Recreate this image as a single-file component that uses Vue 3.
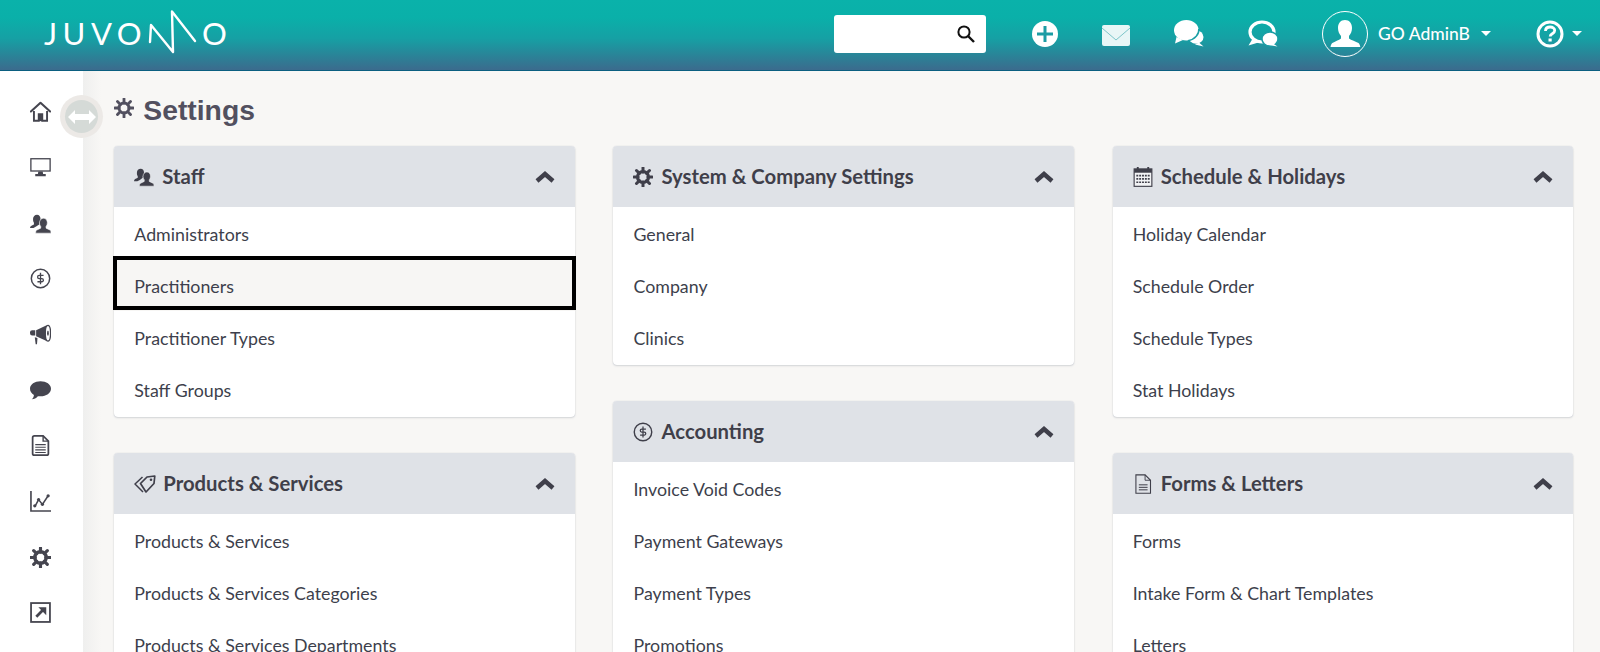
<script setup>
const side = ['home','monitor','staff','dollar','mega','bubble','doc','chart','gear','export']
const columns = [
  [
    { title: 'Staff', icon: 'staff', items: ['Administrators', 'Practitioners', 'Practitioner Types', 'Staff Groups'] },
    { title: 'Products & Services', icon: 'tags', items: ['Products & Services', 'Products & Services Categories', 'Products & Services Departments'] }
  ],
  [
    { title: 'System & Company Settings', icon: 'gear', items: ['General', 'Company', 'Clinics'] },
    { title: 'Accounting', icon: 'dollar', items: ['Invoice Void Codes', 'Payment Gateways', 'Payment Types', 'Promotions'] }
  ],
  [
    { title: 'Schedule & Holidays', icon: 'calendar', items: ['Holiday Calendar', 'Schedule Order', 'Schedule Types', 'Stat Holidays'] },
    { title: 'Forms & Letters', icon: 'docline', items: ['Forms', 'Intake Form & Chart Templates', 'Letters'] }
  ]
]
</script>

<template>
  <div class="app">
    <svg class="sprite" width="0" height="0">
      <symbol id="home" viewBox="0 0 24 24"><path d="M1 12 12 2l11 10" fill="none" stroke="currentColor" stroke-width="2.4" stroke-linecap="round" stroke-linejoin="round"/><path d="M4.5 11.5V22.5h5.5V15h4v7.500h5.500V11.500" fill="none" stroke="currentColor" stroke-width="2.200"/><rect x="9.500" y="15" width="5" height="8" fill="currentColor"/></symbol>
      <symbol id="monitor" viewBox="0 0 24 22"><rect x="1" y="1" width="22" height="14" fill="none" stroke="currentColor" stroke-width="1.500"/><path d="M9.500 15.500h5l.5 3h3v2.500H6v-2.500h3z" fill="currentColor"/></symbol>
      <symbol id="staff" viewBox="0 0 24 24"><path d="M8 2c2.500 0 4 2 4 4.500 0 1.500-.5 3-1.500 4.500v2L7 15.500 4 17H0c0-2 2-3 4.500-4v-2C3.500 9.500 3.500 8 3.500 6.500 3.500 4 5.500 2 8 2z" fill="currentColor"/><path d="M15.500 6c2.500 0 4.300 2.300 4.300 5 0 1.800-.6 3.300-1.500 4.300v2l5 2.500c.5.300.7 2.200.7 3.200H6.500c0-1 .2-2.900.8-3.200l5-2.500v-2c-1-1-1.500-2.500-1.500-4.300 0-2.700 2.200-5 4.700-5z" fill="currentColor" stroke="#fff" stroke-width=".6"/></symbol>
      <symbol id="dollar" viewBox="0 0 24 24"><circle cx="12" cy="12" r="10.500" fill="none" stroke="currentColor" stroke-width="1.700"/><path d="M15.500 8.500H10.500a1.800 1.800 0 0 0 0 3.600h3a1.800 1.800 0 0 1 0 3.600H8.500M12 5.500v13" fill="none" stroke="currentColor" stroke-width="1.500"/></symbol>
      <symbol id="mega" viewBox="0 0 24 24"><path d="M0 9.500a2.500 2.500 0 0 1 2.500-2.500H6v6H2.500A2.500 2.500 0 0 1 0 10.500z" fill="currentColor"/><path d="M7 7l12-5.500v18L7 14z" fill="currentColor"/><ellipse cx="20.500" cy="10.500" rx="3" ry="9" fill="#fff" stroke="currentColor" stroke-width="1.500"/><ellipse cx="20.500" cy="10.500" rx="1" ry="3" fill="currentColor"/><path d="M5.500 15l3 1-.5 7H6.500z" fill="currentColor"/></symbol>
      <symbol id="bubble" viewBox="0 0 24 22"><path d="M12 .5c6.500 0 12 3.500 12 8.500s-5.500 8.700-12 8.700c-1 0-2 0-3-.2C7.500 19.500 4.500 21 2 21c1.500-1.200 2.300-3 2.500-5C1.800 14.500 0 12 0 9 0 4 5.500.5 12 .5z" fill="currentColor"/></symbol>
      <symbol id="doc" viewBox="0 0 20 24"><path d="M3 1h10l6 6v14a2 2 0 0 1-2 2H3a2 2 0 0 1-2-2V3a2 2 0 0 1 2-2z" fill="none" stroke="currentColor" stroke-width="2"/><path d="M13 1v6h6" fill="none" stroke="currentColor" stroke-width="1.600"/><path d="M4 11h12M4 14h12M4 17h12M4 20h12" stroke="currentColor" stroke-width="1.400"/></symbol>
      <symbol id="docline" viewBox="0 0 20 24"><path d="M1.500 1h11L19 7.500V23H1.500z" fill="none" stroke="currentColor" stroke-width="1.300"/><path d="M12.500 1v6.500H19" fill="none" stroke="currentColor" stroke-width="1.100"/><path d="M5 13h10.500M5 16h10.500M5 19h10.500" stroke="currentColor" stroke-width="1.200"/></symbol>
      <symbol id="chart" viewBox="0 0 22 22"><path d="M1 0v21h21" fill="none" stroke="currentColor" stroke-width="1.700"/><path d="M5.500 15.500 9 9l4 5 6-9" fill="none" stroke="currentColor" stroke-width="1.600"/><circle cx="5" cy="15.500" r="1.700" fill="currentColor"/><circle cx="9" cy="9" r="1.700" fill="currentColor"/><circle cx="13" cy="14" r="1.700" fill="currentColor"/><circle cx="19" cy="5" r="1.700" fill="currentColor"/></symbol>
      <symbol id="gear" viewBox="0 0 24 24"><circle cx="12" cy="12" r="6.500" fill="none" stroke="currentColor" stroke-width="4"/><path d="M12 1v5M12 18v5M1 12h5M18 12h5M4.200 4.200l3.500 3.500M16.300 16.300l3.500 3.500M4.200 19.800l3.500-3.500M16.300 7.700l3.500-3.500" stroke="currentColor" stroke-width="3.600" stroke-linecap="round"/></symbol>
      <symbol id="gearmid" viewBox="0 0 24 24"><circle cx="12" cy="12" r="6" fill="none" stroke="currentColor" stroke-width="3.600"/><path d="M12 1v5M12 18v5M1 12h5M18 12h5M4.200 4.200l3.500 3.500M16.300 16.300l3.500 3.500M4.200 19.800l3.500-3.500M16.300 7.700l3.500-3.500" stroke="currentColor" stroke-width="3.400" stroke-linecap="round"/></symbol>
      <symbol id="export" viewBox="0 0 20 20"><rect x="1" y="1" width="18" height="18" fill="none" stroke="currentColor" stroke-width="1.700"/><path d="M6 14 13.500 6.500" stroke="currentColor" stroke-width="2.600"/><path d="M8 5h7.500v7.500z" fill="currentColor"/></symbol>
      <symbol id="tags" viewBox="0 0 22 18"><path d="M6.500 8.500 13 2l7.800-1L20 8.500 12 17z" fill="none" stroke="currentColor" stroke-width="1.700" stroke-linejoin="round"/><path d="M8.500 2 1 9l8 8" fill="none" stroke="currentColor" stroke-width="1.500" stroke-linejoin="round"/><circle cx="17" cy="4.800" r="1.300" fill="currentColor"/></symbol>
      <symbol id="calendar" viewBox="0 0 20 21"><rect x=".7" y="2" width="18.600" height="18.300" fill="#f2f3f5" stroke="currentColor" stroke-width="1.200"/><rect x=".7" y="2" width="18.600" height="4" fill="currentColor"/><rect x="3.500" y="0" width="2" height="3" fill="currentColor"/><rect x="14.500" y="0" width="2" height="3" fill="currentColor"/><path d="M3 9h14M3 12.500h14M3 16h14" stroke="currentColor" stroke-width="1.800" stroke-dasharray="2 1"/></symbol>
      <symbol id="chevron" viewBox="0 0 20 12"><path d="M2 10 10 3l8 7" fill="none" stroke="currentColor" stroke-width="4.400"/></symbol>
    </svg>

    <header class="topbar">
      <div class="logo" aria-label="JUVONNO">
        <span class="logo-text">JUVO</span>
        <svg class="logo-wave" width="50" height="50" viewBox="0 0 50 50"><path d="M2 32 3 15l22 27-1-40.500L47 31" fill="none" stroke="#fff" stroke-width="2.400" stroke-linecap="round" stroke-linejoin="round"/></svg>
        <span class="logo-text last">O</span>
      </div>
      <div class="tools">
        <div class="search">
          <svg width="20" height="20" viewBox="0 0 20 20"><circle cx="8" cy="8" r="5.600" fill="none" stroke="#111" stroke-width="2"/><path d="M12 12l6 6" stroke="#111" stroke-width="2.400"/></svg>
        </div>
        <svg class="t-plus" width="28" height="28" viewBox="0 0 28 28"><circle cx="14" cy="14" r="13" fill="#fff"/><path d="M14 6v16M6 14h16" stroke="#1b9ca4" stroke-width="3"/></svg>
        <svg class="t-mail" width="28" height="21" viewBox="0 0 28 21"><rect width="28" height="21" rx="2" fill="#e8f6f6"/><path d="M0 3 14 15 28 3" fill="none" stroke="#7cc5c9" stroke-width="1"/></svg>
        <svg class="t-chat" width="30" height="27" viewBox="0 0 30 27"><ellipse cx="22" cy="17" rx="7.500" ry="6.800" fill="#fff"/><path d="M25 22.500 29.500 26.500 21 24.500z" fill="#fff"/><path d="M2.500 17 1 23.500 9 20z" fill="#fff"/><ellipse cx="12.300" cy="10.300" rx="12.300" ry="10.300" fill="#fff" stroke="#1a9fa5" stroke-width="0"/><path d="M24.800 9c.6 5-3.800 10.500-10.800 11.800" fill="none" stroke="#1a9fa5" stroke-width="1.500"/></svg>
        <svg class="t-chat2" width="30" height="27" viewBox="0 0 30 27"><ellipse cx="14" cy="12" rx="12" ry="10" fill="none" stroke="#fff" stroke-width="3.200"/><path d="M5 18 .5 25.500 12 22z" fill="#fff"/><ellipse cx="22" cy="19" rx="8" ry="7" fill="#fff" stroke="#1a9ea5" stroke-width="1.500"/><path d="M25 23.500 29.500 26.500 21 25z" fill="#fff"/></svg>
        <div class="avatar">
          <svg width="46" height="46" viewBox="0 0 46 46"><circle cx="23" cy="23" r="22.500" fill="none" stroke="#fff" stroke-width="1"/><path d="M23 9c4.500 0 7 3.500 7 8 0 3.300-1.200 6-3 8v2.500c2 1.500 7 3 9.500 4.500 1 .6 1.500 2.500 1.800 4H8.500c.3-1.500.8-3.400 1.800-4C12.800 30.500 17 29 19 27.500V25c-1.800-2-3-4.700-3-8 0-4.500 2.500-8 7-8z" fill="#fff"/></svg>
        </div>
        <span class="user">GO AdminB</span>
        <i class="caret"></i>
        <svg class="t-help" width="28" height="28" viewBox="0 0 28 28"><circle cx="14" cy="14" r="12" fill="none" stroke="#fff" stroke-width="3"/><path d="M9.500 11c0-2.500 2-4 4.700-4s4.500 1.500 4.500 3.500c0 3.500-4.500 3-4.500 6" fill="none" stroke="#fff" stroke-width="2.800"/><rect x="12.500" y="18.500" width="3.200" height="3" fill="#fff"/></svg>
        <i class="caret"></i>
      </div>
    </header>

    <div class="body">
      <nav class="sidebar">
        <div v-for="s in side" :key="s" class="side-item">
          <svg class="side-icon"><use :href="'#' + s"/></svg>
        </div>
      </nav>
      <main class="main">
        <h1 class="page-title">
          <svg class="title-icon"><use href="#gearmid"/></svg>
          Settings
        </h1>
        <div class="grid">
          <div v-for="(col, c) in columns" :key="c" class="col">
            <section v-for="p in col" :key="p.title" class="panel">
              <div class="panel-head">
                <svg class="head-icon" :class="p.icon"><use :href="'#' + p.icon"/></svg>
                <h2>{{ p.title }}</h2>
                <svg class="chev"><use href="#chevron"/></svg>
              </div>
              <a v-for="it in p.items" :key="it" class="row" :class="{ focus: it === 'Practitioners' }">{{ it }}</a>
            </section>
          </div>
        </div>
      </main>
      <div class="toggle">
        <div class="toggle-in">
          <svg width="28" height="14" viewBox="0 0 28 14"><path d="M0 7 7 0v4h14V0l7 7-7 7v-4H7v4z" fill="#fff"/></svg>
        </div>
      </div>
    </div>
  </div>
</template>

<style>
html, body { margin: 0; background: #f8f7f5; }
</style>

<style scoped>
.app { width: 1600px; height: 652px; overflow: hidden; display: flex; flex-direction: column; font-family: Lato, sans-serif; color: #3d3f4c; }
.sprite { position: absolute; }
.topbar { height: 71px; flex: none; display: flex; align-items: center; box-sizing: border-box; border-bottom: 1px solid #0b5f80; background: linear-gradient(#0ab2aa 0%, #0ab0a9 25%, #16a0a4 55%, #3b6b8d 100%); color: #fff; }
.logo { display: flex; align-items: center; margin-left: 44px; height: 70px; }
.logo-text { font: 400 31px/1 Lato, sans-serif; letter-spacing: 5.500px; margin-top: -3px; width: 104px; overflow: visible; white-space: nowrap; }
.logo-text.last { letter-spacing: 0; margin-left: 4px; width: auto; }
.tools { margin-left: auto; display: flex; align-items: center; padding-right: 18px; margin-top: -3px; }
.search { width: 152px; height: 38px; box-sizing: border-box; background: #fff; border-radius: 3px; display: flex; align-items: center; justify-content: flex-end; padding-right: 10px; margin-right: 44.200px; }
.t-plus { margin-right: 43.500px; }
.t-mail { margin-right: 44px; margin-top: 4px; }
.t-chat { margin-right: 44px; }
.t-chat2 { margin-right: 44px; }
.avatar { width: 46px; height: 46px; margin-right: 10px; }
.user { font-size: 17.500px; font-weight: 500; width: 103px; }
.caret { width: 0; height: 0; border: 5px solid transparent; border-top-color: #fff; border-bottom: 0; }
.t-help { margin-left: 44.500px; margin-right: 8.500px; }
.body { flex: 1; display: flex; position: relative; min-height: 0; }
.sidebar { width: 83px; flex: none; background: #fff; display: flex; flex-direction: column; padding-top: 13px; box-sizing: border-box; }
.side-item { height: 55.670px; flex: none; display: flex; align-items: center; justify-content: center; padding-right: 2px; }
.side-icon { width: 21px; height: 21px; color: #45454f; }
.main { flex: 1; box-sizing: border-box; padding: 0 27px 0 31.300px; background: linear-gradient(90deg, #efefee 0, #f8f7f5 18px); min-width: 0; }
.page-title { display: flex; align-items: center; gap: 9px; margin: 0; height: 75px; font: 700 28.300px/1 "Liberation Sans", sans-serif; color: #52505f; padding-top: 3px; box-sizing: border-box; }
.title-icon { width: 20px; height: 20px; color: #52505f; margin-top: -4px; }
.grid { display: grid; grid-template-columns: repeat(3, 460.600px); column-gap: 38.600px; }
.col { display: flex; flex-direction: column; gap: 36px; }
.panel { background: #fff; border-radius: 4px; box-shadow: 0 1px 2px rgba(90, 100, 120, .22), 0 0 1px rgba(90, 100, 120, .3); padding-bottom: 2px; }
.panel-head { height: 61px; background: #dfe2e7; border-radius: 4px 4px 0 0; display: flex; align-items: center; padding: 0 20px; }
.head-icon { width: 20px; height: 20px; color: #3f3f4a; margin-right: 8px; flex: none; }
.head-icon.tags { width: 22px; height: 18px; margin-right: 7px; }
h2 { margin: 0; font: 700 20.300px/1 Lato, sans-serif; color: #3f3f4a; flex: 1; }
.chev { width: 20px; height: 12px; color: #3f3f4a; flex: none; }
.row { display: flex; align-items: center; height: 52px; box-sizing: border-box; padding: 2px 0 0 20px; font-size: 17.800px; color: #3d3f4c; position: relative; }
.row.focus { background: #f7f6f4; }
.row.focus::after { content: ""; position: absolute; inset: -3px -1px 1px -1.500px; border: 4px solid #000; }
.toggle { position: absolute; left: 60px; top: 24px; width: 43px; height: 43px; border-radius: 50%; background: #ece9e6; display: flex; align-items: center; justify-content: center; }
.toggle-in { width: 33px; height: 33px; border-radius: 50%; background: #d5dad7; display: flex; align-items: center; justify-content: center; }
</style>
